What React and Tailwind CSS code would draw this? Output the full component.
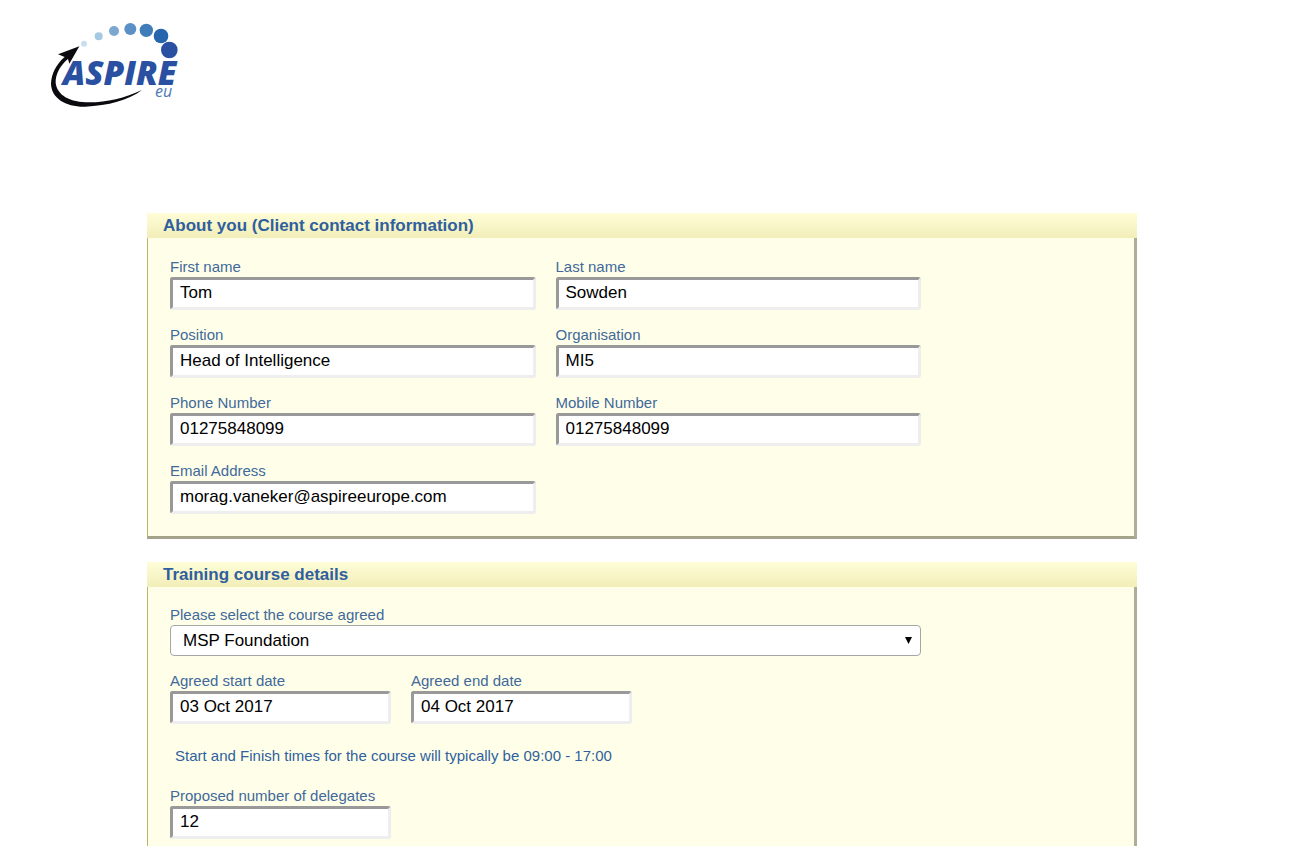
import React, { useState } from "react";

const contactFields = [
  { name: "firstName", label: "First name", type: "text" },
  { name: "lastName", label: "Last name", type: "text" },
  { name: "position", label: "Position", type: "text" },
  { name: "organisation", label: "Organisation", type: "text" },
  { name: "phone", label: "Phone Number", type: "tel" },
  { name: "mobile", label: "Mobile Number", type: "tel" },
  { name: "email", label: "Email Address", type: "email" },
];

function Logo() {
  return (
    <svg viewBox="0 0 450 300" className="w-[150px] h-[100px]" role="img" aria-label="Aspire EU">
      <circle cx="132" cy="86" r="9" fill="#c9dfee" />
      <circle cx="176" cy="64" r="12" fill="#a5c9e3" />
      <circle cx="222" cy="48" r="15" fill="#7ba7d0" />
      <circle cx="271" cy="42" r="18" fill="#5a90c5" />
      <circle cx="319" cy="46" r="20" fill="#3f7dba" />
      <circle cx="363" cy="63" r="22" fill="#2465ab" />
      <circle cx="388" cy="105" r="25" fill="#2a50a2" />
      {/* swoosh with arrow head */}
      <path
        d="M118 94 L54 118 L74 126 C48 148 34 178 33 206 C34 250 78 276 135 275 C205 272 265 256 306 225 C255 249 200 262 148 262 C90 262 52 242 47 204 C46 176 62 150 84 132 L88 146 Z"
        fill="#0b0b0f"
      />
      <text x="68" y="209" fontFamily="'Open Sans', sans-serif" fontSize="100" fontWeight="800" fontStyle="italic" fill="#2a50a2">
        ASPIRE
      </text>
      <text x="345" y="245" fontFamily="'Open Sans', sans-serif" fontSize="48" fontWeight="500" fontStyle="italic" fill="#4a78b5">
        eu
      </text>
    </svg>
  );
}

function Panel({ title, children }) {
  return (
    <section className="mb-[23px]">
      <h2 className="h-[25px] px-4 text-[17px] leading-[25px] font-bold text-[#2f5f9e] bg-linear-to-b from-[#fffdd8] to-[#f2eeb8]">
        {title}
      </h2>
      <div className="px-[22px] pt-[18px] pb-[22px] bg-[#ffffe9] border-l border-l-[#bdb76b] border-r-3 border-r-[#adad9b] border-b-3 border-b-[#a5a38c]">
        {children}
      </div>
    </section>
  );
}

function Field({ name, label, type = "text", value, onChange }) {
  return (
    <div className="flex flex-col">
      <label htmlFor={name} className="text-[15px] leading-5 text-[#41699b]">
        {label}
      </label>
      <input
        id={name}
        name={name}
        type={type}
        value={value}
        onChange={onChange}
        className="w-full h-[33px] px-[7px] pb-px text-[17px] leading-5 text-black bg-white rounded-[3px] border-3 border-t-[#999] border-l-[#999] border-r-[#eee] border-b-[#eee]"
      />
    </div>
  );
}

export default function App() {
  const [form, setForm] = useState({
    firstName: "Tom",
    lastName: "Sowden",
    position: "Head of Intelligence",
    organisation: "MI5",
    phone: "01275848099",
    mobile: "01275848099",
    email: "morag.vaneker@aspireeurope.com",
    course: "MSP Foundation",
    startDate: "03 Oct 2017",
    endDate: "04 Oct 2017",
    delegates: "12",
  });

  const handleChange = (e) =>
    setForm((f) => ({ ...f, [e.target.name]: e.target.value }));

  return (
    <div className="bg-white font-['Liberation_Sans',Arial,sans-serif]">
      <header className="h-[213px] pt-[15px] pl-10">
        <Logo />
      </header>

      <main className="pr-2">
        <form className="max-w-[990px] mx-auto">
          {/* CONTACT */}
          <Panel title="About you (Client contact information)">
            <div className="grid grid-cols-2 gap-x-5 gap-y-[15px] max-w-[751px] pt-px">
              {contactFields.map((field) => (
                <Field
                  key={field.name}
                  {...field}
                  value={form[field.name]}
                  onChange={handleChange}
                />
              ))}
            </div>
          </Panel>

          {/* COURSE */}
          <Panel title="Training course details">
            <div className="flex flex-col max-w-[751px]">
              <label htmlFor="course" className="text-[15px] leading-5 text-[#41699b]">
                Please select the course agreed
              </label>
              <div className="relative">
                <select
                  id="course"
                  name="course"
                  value={form.course}
                  onChange={handleChange}
                  className="w-full h-[31px] px-3 appearance-none text-[17px] leading-5 text-black bg-white border border-[#a6a6a6] rounded-sm"
                >
                  <option>MSP Foundation</option>
                  <option>MSP Practitioner</option>
                </select>
                <svg
                  viewBox="0 0 7 7"
                  className="absolute right-[9px] top-3 w-[7px] h-[7px] pointer-events-none"
                  aria-hidden="true"
                >
                  <path d="M0 0h7L3.5 7z" fill="#000" />
                </svg>
              </div>
            </div>

            <div className="grid grid-cols-[221px_221px] gap-x-5 mt-[15px]">
              <Field name="startDate" label="Agreed start date" value={form.startDate} onChange={handleChange} />
              <Field name="endDate" label="Agreed end date" value={form.endDate} onChange={handleChange} />
            </div>

            <p className="mt-[22px] mb-5 pl-[5px] text-[15px] leading-5 text-[#2f5f9e]">
              Start and Finish times for the course will typically be 09:00 - 17:00
            </p>

            <div className="max-w-[221px]">
              <Field name="delegates" label="Proposed number of delegates" value={form.delegates} onChange={handleChange} />
            </div>
          </Panel>
        </form>
      </main>
    </div>
  );
}
